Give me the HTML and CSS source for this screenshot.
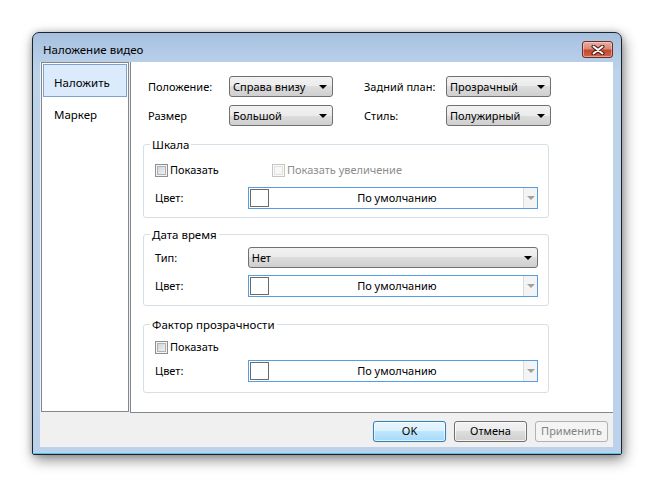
FILE: index.html
```html
<!DOCTYPE html>
<html lang="ru">
<head>
<meta charset="utf-8">
<title>Наложение видео</title>
<link rel="stylesheet" href="styles.css">
</head>
<body>
<div class="page">
  <div class="window">
    <div class="titlebar">
      <div class="title">Наложение видео</div>
      <div class="close">
        <svg width="14" height="10" viewBox="0 0 14 10">
          <path d="M2.5 1.5 L11.5 8.5 M11.5 1.5 L2.5 8.5" stroke="#4a1a12" stroke-width="4" stroke-linecap="round"/>
          <path d="M2.5 1.5 L11.5 8.5 M11.5 1.5 L2.5 8.5" stroke="#ffffff" stroke-width="2" stroke-linecap="round"/>
        </svg>
      </div>
    </div>
    <div class="frame">
      <div class="client">
        <div class="panels">
          <div class="nav">
            <div class="nav-item selected">Наложить</div>
            <div class="nav-item">Маркер</div>
          </div>
          <div class="content">
            <div class="top-grid">
              <div class="lbl">Положение:</div>
              <div class="combo"><span>Справа внизу</span><i class="arrow"></i></div>
              <div class="lbl lbl2">Задний план:</div>
              <div class="combo"><span>Прозрачный</span><i class="arrow"></i></div>
              <div class="lbl">Размер</div>
              <div class="combo"><span>Большой</span><i class="arrow"></i></div>
              <div class="lbl lbl2">Стиль:</div>
              <div class="combo"><span>Полужирный</span><i class="arrow"></i></div>
            </div>

            <fieldset class="group g1">
              <legend>Шкала</legend>
              <div class="check-row">
                <label class="check first-check"><i class="box"></i>Показать</label>
                <label class="check disabled"><i class="box"></i>Показать увеличение</label>
              </div>
              <div class="row">
                <div class="row-lbl">Цвет:</div>
                <div class="color-combo"><i class="swatch"></i><span>По умолчанию</span><i class="drop"><i class="arrow grey"></i></i></div>
              </div>
            </fieldset>

            <fieldset class="group g2">
              <legend>Дата время</legend>
              <div class="row first">
                <div class="row-lbl">Тип:</div>
                <div class="combo wide"><span>Нет</span><i class="arrow"></i></div>
              </div>
              <div class="row second">
                <div class="row-lbl">Цвет:</div>
                <div class="color-combo"><i class="swatch"></i><span>По умолчанию</span><i class="drop"><i class="arrow grey"></i></i></div>
              </div>
            </fieldset>

            <fieldset class="group g3">
              <legend>Фактор прозрачности</legend>
              <div class="check-row">
                <label class="check"><i class="box"></i>Показать</label>
              </div>
              <div class="row">
                <div class="row-lbl">Цвет:</div>
                <div class="color-combo"><i class="swatch"></i><span>По умолчанию</span><i class="drop"><i class="arrow grey"></i></i></div>
              </div>
            </fieldset>
          </div>
        </div>
        <div class="buttons">
          <div class="btn default">OK</div>
          <div class="btn">Отмена</div>
          <div class="btn disabled">Применить</div>
        </div>
      </div>
    </div>
  </div>
</div>
</body>
</html>
```
FILE: styles.css
```css
* { box-sizing: border-box; }
html, body { margin: 0; padding: 0; background: #ffffff; }
body {
  font-family: "Noto Sans", "Open Sans", sans-serif;
  font-size: 11px;
  color: #000;
}
.page { padding: 32px 0 0 32px; width: 654px; height: 487px; }

.window {
  width: 590px;
  height: 423px;
  border: 1px solid #1a2430;
  border-radius: 7px 7px 2px 2px;
  background: linear-gradient(to bottom, #a6c0de 0px, #b3cbe6 20px, #bdd3ea 40px, #bcd2ea 100%);
  box-shadow: 2px 5px 14px rgba(0, 0, 0, 0.45), 0 0 6px rgba(0, 0, 0, 0.2);
  display: flex;
  flex-direction: column;
}
.titlebar {
  height: 29px;
  display: flex;
  justify-content: space-between;
  align-items: flex-start;
  flex: none;
}
.title {
  padding: 9px 0 0 10px;
  line-height: 16px;
  font-size: 11.5px;
  color: #000;
}
.close {
  margin: 8px 8px 0 0;
  width: 31px;
  height: 17px;
  border: 1px solid #6f2b20;
  border-radius: 3px;
  background: linear-gradient(to bottom, #e9aea2 0%, #d88a79 45%, #c5472f 55%, #d0654d 100%);
  display: flex;
  align-items: center;
  justify-content: center;
  box-shadow: inset 0 0 0 1px rgba(255, 220, 210, 0.5);
}
.close svg { display: block; }

.frame {
  flex: 1;
  padding: 0 7px 6px 7px;
  border-bottom: 1px solid #4fc3e8;
}
.client {
  width: 573px;
  height: 385px;
  background: #f0f0f0;
  display: flex;
  flex-direction: column;
}
.panels {
  display: flex;
  height: 351px;
  align-items: flex-start;
}
.nav {
  margin-left: 1px;
  width: 88px;
  height: 350px;
  border: 1px solid #828790;
  background: #fff;
  padding: 1px 1px;
}
.nav-item {
  height: 33px;
  line-height: 33px;
  padding-left: 10px;
  border: 1px solid transparent;
  font-size: 11.5px;
}
.nav-item.selected {
  background: #dcebfc;
  border-color: #7da2ce;
  padding-top: 1px;
}
.content {
  margin-left: 1px;
  flex: 1;
  height: 351px;
  background: #fff;
  border-left: 1px solid #828790;
  border-bottom: 1px solid #828790;
}

.top-grid {
  display: grid;
  grid-template-columns: 81px 104px 113px 105px;
  row-gap: 8px;
  padding: 14px 0 0 17px;
}
.lbl { padding-top: 3px; line-height: 16px; }
.lbl2 { margin-left: 31px; }

.combo {
  height: 21px;
  border: 1px solid #707070;
  border-radius: 3px;
  background: linear-gradient(to bottom, #f2f2f2 0%, #ebebeb 50%, #dddddd 50%, #cfcfcf 100%);
  display: flex;
  align-items: center;
  justify-content: space-between;
  padding: 0 5px 0 3px;
  line-height: 16px;
}
.combo.wide { width: 291px; }
.arrow {
  display: block;
  width: 0;
  height: 0;
  border-left: 4px solid transparent;
  border-right: 4px solid transparent;
  border-top: 4px solid #000;
}
.arrow.grey { border-top-color: #a0a0a0; }

.group {
  margin: 0 0 0 12px;
  width: 406px;
  border: 1px solid #d5dfe5;
  border-radius: 3px;
  padding: 0 10px 8px 11px;
  min-width: 0;
}
.group legend {
  padding: 0 2px;
  margin-left: -5px;
  line-height: 15px;
  font-size: 11.5px;
}
.g1 { margin-top: 11px; padding-bottom: 8px; }
.g2 { margin-top: 9px; padding-bottom: 8px; }
.g3 { margin-top: 11px; padding-bottom: 10px; }

.check-row {
  display: flex;
  height: 16px;
  align-items: center;
  margin-top: 10px;
}
.g3 .check-row { margin-top: 7px; }
.g3 .row { margin-top: 5px; }
.check {
  display: flex;
  align-items: center;
  line-height: 16px;
}
.first-check { width: 117px; }
.check .box {
  display: block;
  width: 13px;
  height: 13px;
  border: 1px solid #8e8f8f;
  background: linear-gradient(135deg, #cbcfd5 0%, #f6f6f6 100%);
  box-shadow: inset 0 0 0 1px #f4f4f4, inset 0 0 0 2px #aeb3b9;
  margin-right: 2px;
}
.check.disabled { color: #8d8d8d; }
.check.disabled .box {
  border-color: #c4c4c4;
  background: #f7f7f7;
  box-shadow: inset 0 0 0 1px #fbfbfb, inset 0 0 0 2px #e0e0e0;
}

.row {
  display: flex;
  align-items: center;
  margin-top: 9px;
}
.row.first { margin-top: 5px; }
.row.second { margin-top: 7px; }
.row-lbl { width: 93px; line-height: 16px; }

.color-combo {
  width: 291px;
  height: 22px;
  border: 1px solid #569de5;
  background: #fff;
  display: flex;
  align-items: center;
}
.swatch {
  display: block;
  flex: none;
  margin-left: 1px;
  width: 19px;
  height: 18px;
  border: 1px solid #6b6b6b;
  background: #fff;
}
.color-combo span {
  flex: 1;
  text-align: center;
  line-height: 16px;
  padding-left: 2px;
}
.drop {
  display: flex;
  flex: none;
  align-items: center;
  justify-content: center;
  width: 14px;
  height: 20px;
  background: #f4f4f4;
  border-left: 1px solid #dcdcdc;
}

.buttons {
  display: flex;
  justify-content: flex-end;
  gap: 8px;
  padding: 8px 5px 0 0;
}
.btn {
  width: 73px;
  height: 21px;
  border: 1px solid #707070;
  border-radius: 3px;
  background: linear-gradient(to bottom, #f2f2f2 0%, #ebebeb 50%, #dddddd 50%, #cfcfcf 100%);
  box-shadow: inset 0 0 0 1px rgba(255, 255, 255, 0.7);
  text-align: center;
  line-height: 18px;
}
.btn.default {
  border-color: #3c7fb1;
  background: linear-gradient(to bottom, #eaf6fd 0%, #d9f0fc 50%, #bee6fd 50%, #a7d9f5 100%);
  box-shadow: inset 0 0 0 1px rgba(255, 255, 255, 0.6), 0 0 1px #48d2f8;
}
.btn.disabled {
  border-color: #adb2b5;
  background: #f4f4f4;
  box-shadow: none;
  color: #838383;
}
```
